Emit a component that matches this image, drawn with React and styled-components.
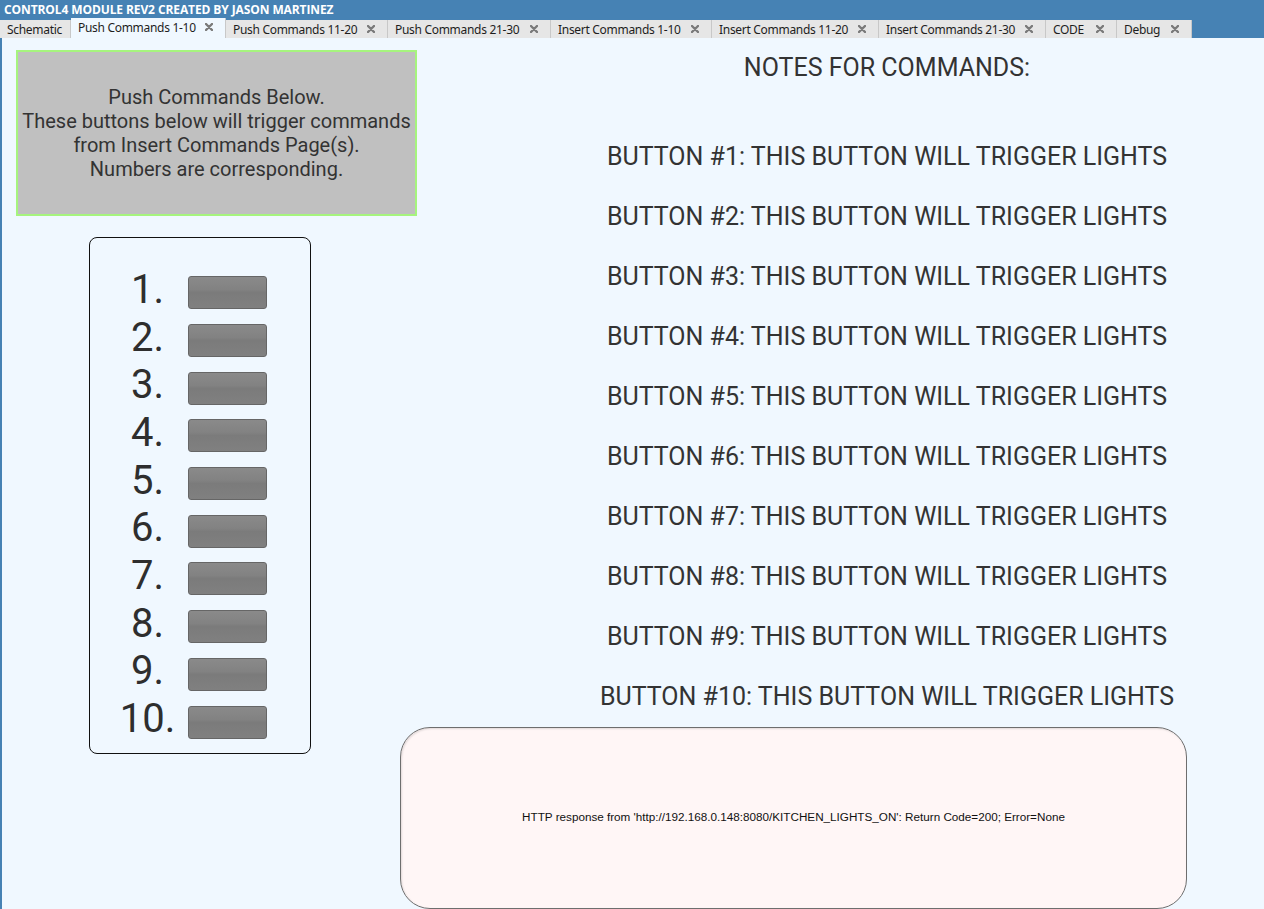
import React from 'react'
import styled, { createGlobalStyle } from 'styled-components'

const tabs = [
  { text: 'Schematic', width: 71, close: false },
  { text: 'Push Commands 1-10', width: 155, close: true, active: true },
  { text: 'Push Commands 11-20', width: 162, close: true },
  { text: 'Push Commands 21-30', width: 163, close: true },
  { text: 'Insert Commands 1-10', width: 161, close: true },
  { text: 'Insert Commands 11-20', width: 167, close: true },
  { text: 'Insert Commands 21-30', width: 167, close: true },
  { text: 'CODE', width: 71, close: true },
  { text: 'Debug', width: 75, close: true },
]

const numbers = [1, 2, 3, 4, 5, 6, 7, 8, 9, 10]

function CloseIcon() {
  return (
    <svg width="8" height="8" viewBox="0 0 8 8">
      <path d="M1 1 L7 7 M7 1 L1 7" stroke="#7a7a7a" strokeWidth="2.4" strokeLinecap="round" />
    </svg>
  )
}

function App() {
  return (
    <Wrapper>
      <GlobalStyle />
      <Header>
        <Title>CONTROL4 MODULE REV2 CREATED BY JASON MARTINEZ</Title>
        <TabRow>
          {tabs.map((tab, key) => (
            <Tab key={key} width={tab.width} active={tab.active}>
              <span>{tab.text}</span>
              {tab.close && (
                <Close>
                  <CloseIcon />
                </Close>
              )}
            </Tab>
          ))}
        </TabRow>
      </Header>
      <Canvas>
        <InfoBox>
          Push Commands Below.
          <br />
          These buttons below will trigger commands
          <br />
          from Insert Commands Page(s).
          <br />
          Numbers are corresponding.
        </InfoBox>
        <NumberPanel>
          {numbers.map((n) => (
            <NumberRow key={n}>
              <Number>{n}.</Number>
              <PushButton />
            </NumberRow>
          ))}
        </NumberPanel>
        <Notes>
          <NotesTitle>NOTES FOR COMMANDS:</NotesTitle>
          {numbers.map((n) => (
            <Note key={n}>BUTTON #{n}: THIS BUTTON WILL TRIGGER LIGHTS</Note>
          ))}
        </Notes>
        <Response>
          HTTP response from 'http://192.168.0.148:8080/KITCHEN_LIGHTS_ON': Return Code=200; Error=None
        </Response>
      </Canvas>
    </Wrapper>
  )
}

export default App

const GlobalStyle = createGlobalStyle`
  html, body {
    margin: 0;
    padding: 0;
    background: #f0f8ff;
  }
`

const Wrapper = styled.div`
  width: 1264px;
  height: 909px;
  overflow: hidden;
  background: #f0f8ff;
  font-family: Roboto, "Liberation Sans", sans-serif;
`

const Header = styled.div`
  background: #4682b4;
  height: 38px;
`

const Title = styled.div`
  height: 20px;
  line-height: 20px;
  padding-left: 4px;
  color: #fff;
  font-family: "Open Sans", "Liberation Sans", sans-serif;
  font-weight: 700;
  font-size: 12px;
  letter-spacing: -0.1px;
`

const TabRow = styled.div`
  display: flex;
  align-items: flex-end;
  height: 18px;
`

const Tab = styled.div`
  box-sizing: border-box;
  width: ${(p) => p.width}px;
  height: ${(p) => (p.active ? 20 : 18)}px;
  margin-top: ${(p) => (p.active ? -2 : 0)}px;
  display: flex;
  align-items: center;
  justify-content: space-between;
  padding: ${(p) => (p.active ? '0 12px 2px 7px' : '0 12px 0 7px')};
  background: ${(p) => (p.active ? '#f0f8ff' : '#e6e6e6')};
  border-right: 1px solid #c8c8c8;
  color: #1e1e1e;
  font-family: "Noto Sans", "Open Sans", sans-serif;
  font-size: 12px;
  letter-spacing: -0.3px;
  white-space: nowrap;
`

const Close = styled.span`
  display: flex;
  align-items: center;
`

const Canvas = styled.div`
  box-sizing: border-box;
  height: 871px;
  border-left: 2px solid #4682b4;
  padding-top: 12px;
  display: grid;
  grid-template-columns: 14px 384px 17px 770px 1fr;
  grid-template-rows: 677px 1fr;
  color: #333;
`

const InfoBox = styled.div`
  grid-column: 2 / 4;
  grid-row: 1;
  align-self: start;
  box-sizing: border-box;
  height: 166px;
  display: flex;
  align-items: center;
  justify-content: center;
  text-align: center;
  background: #c0c0c0;
  border: 2px solid #a6f47e;
  font-size: 20px;
  line-height: 24px;
  color: #333;
`

const NumberPanel = styled.div`
  grid-column: 2;
  grid-row: 1 / 3;
  align-self: start;
  margin: 187px 0 0 73px;
  box-sizing: border-box;
  width: 222px;
  height: 517px;
  border: 1px solid #111;
  border-radius: 8px;
  padding: 31px 0 0 22px;
`

const NumberRow = styled.div`
  display: grid;
  grid-template-columns: 71px 79px;
  column-gap: 5px;
  align-items: center;
  height: 47.7px;
`

const Number = styled.div`
  text-align: center;
  font-size: 40px;
  line-height: 40px;
  margin-top: -6px;
  color: #2e2e2e;
`

const PushButton = styled.div`
  box-sizing: border-box;
  height: 33px;
  border: 1px solid #666;
  border-radius: 3px;
  background: linear-gradient(#8a8a8a, #828282 40%, #7b7b7b 50%, #808080);
`

const Notes = styled.div`
  grid-column: 4 / 6;
  grid-row: 1;
  padding: 1px 0 0 93px;
  text-align: center;
  color: #333;
`

const NotesTitle = styled.div`
  font-size: 25px;
  line-height: 34px;
  margin-bottom: 42px;
`

const Note = styled.div`
  font-size: 25px;
  line-height: 60px;
  height: 60px;
  white-space: nowrap;
`

const Response = styled.div`
  grid-column: 3 / 5;
  grid-row: 2;
  box-sizing: border-box;
  height: 182px;
  padding-bottom: 3px;
  display: flex;
  align-items: center;
  justify-content: center;
  background: #fff6f6;
  border: 1px solid #6e6e6e;
  border-radius: 30px;
  box-shadow: inset 1px 1px 2px rgba(0, 0, 0, 0.12);
  font-family: "Liberation Sans", sans-serif;
  font-size: 11.7px;
  color: #111;
`
